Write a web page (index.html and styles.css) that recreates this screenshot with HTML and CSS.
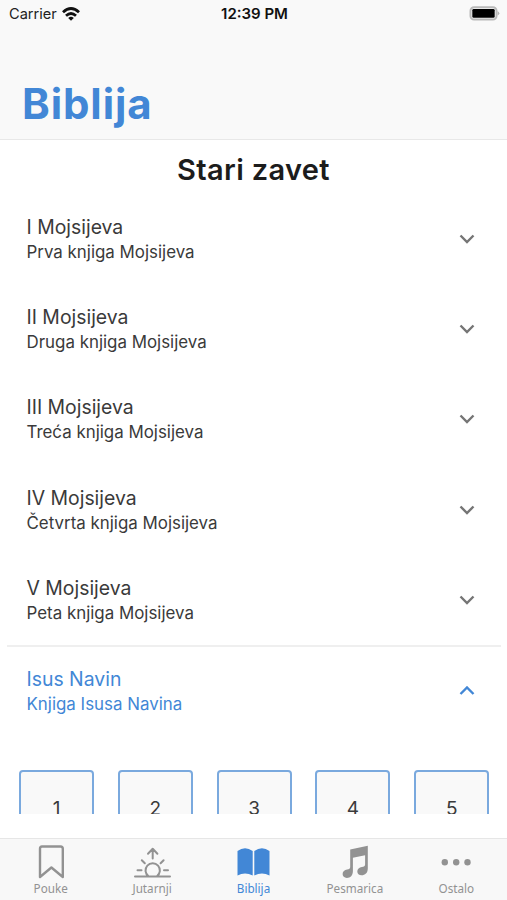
FILE: index.html
```html
<!DOCTYPE html>
<html lang="sr-Latn">
<head>
<meta charset="utf-8">
<title>Biblija</title>
<link rel="stylesheet" href="styles.css">
</head>
<body>
<div class="app">
  <header class="header">
    <div class="status">
      <div class="carrier"><span>Carrier</span>
        <svg class="wifi" viewBox="0 0 18 14"><g fill="none" stroke="#111" stroke-width="2.8"><path d="M1 5.2Q9-2.2 17 5.2"/><path d="M4 8.7Q9 4.200 14 8.700"/></g><path d="M6.200 10.900Q9 8.700 11.800 10.900L9 13.700Z" fill="#111"/></svg>
      </div>
      <div class="clock">12:39 PM</div>
      <svg class="battery" viewBox="0 0 31 15"><rect x="1.500" y="1.200" width="26" height="12.400" rx="3.600" fill="none" stroke="#b9b9b9" stroke-width="2"/><rect x="3.300" y="3" width="22.400" height="8.800" rx="1.300"/><path d="M28.600 5Q32 7.300 28.600 9.600Z" fill="#b4b4b4"/></svg>
    </div>
    <h1 class="title">Biblija</h1>
  </header>
  <main class="content">
    <h2 class="section-title">Stari zavet</h2>
    <div class="book"><div><div class="name">I Mojsijeva</div><div class="sub">Prva knjiga Mojsijeva</div></div><svg class="chevron" viewBox="0 0 16 10"><path d="M1.500 1.500L8 8L14.500 1.500"/></svg></div>
    <div class="book"><div><div class="name">II Mojsijeva</div><div class="sub">Druga knjiga Mojsijeva</div></div><svg class="chevron" viewBox="0 0 16 10"><path d="M1.500 1.500L8 8L14.500 1.500"/></svg></div>
    <div class="book"><div><div class="name">III Mojsijeva</div><div class="sub">Treća knjiga Mojsijeva</div></div><svg class="chevron" viewBox="0 0 16 10"><path d="M1.500 1.500L8 8L14.500 1.500"/></svg></div>
    <div class="book"><div><div class="name">IV Mojsijeva</div><div class="sub">Četvrta knjiga Mojsijeva</div></div><svg class="chevron" viewBox="0 0 16 10"><path d="M1.500 1.500L8 8L14.500 1.500"/></svg></div>
    <div class="book"><div><div class="name">V Mojsijeva</div><div class="sub">Peta knjiga Mojsijeva</div></div><svg class="chevron" viewBox="0 0 16 10"><path d="M1.500 1.500L8 8L14.500 1.500"/></svg></div>
    <div class="book open"><div><div class="name">Isus Navin</div><div class="sub">Knjiga Isusa Navina</div></div><svg class="chevron" viewBox="0 0 16 10"><path d="M1.500 8L8 1.500L14.500 8"/></svg></div>
    <div class="chapters"><div class="chapter">1</div><div class="chapter">2</div><div class="chapter">3</div><div class="chapter">4</div><div class="chapter">5</div></div>
  </main>
  <nav class="tabs">
    <div class="tab"><svg viewBox="0 0 40 36"><path class="line" d="M11 3.500H29.500Q31.800 3.500 31.800 5.800V34L20.400 24.500L9 34V5.800Q9 3.500 11 3.500Z"/></svg><span>Pouke</span></div>
    <div class="tab"><svg viewBox="0 0 40 36"><g class="line thin"><path d="M3 33.500H38M16.500 33.300A7.200 7.200 0 1 1 24.900 33.300M20.700 15.500V6M16 10.700L20.700 5.800L25.400 10.700M9.800 17.300L12.800 20.300M31.600 17.300L28.600 20.300M5.500 27.300H9.500M32 27.300H36"/></g></svg><span>Jutarnji</span></div>
    <div class="tab active"><svg viewBox="0 0 40 36"><path class="solid" d="M19.700 8V32.500Q12 28.500 4.500 32.500V8Q12 2.500 19.700 8ZM21.300 8V32.500Q29 28.500 36.500 32.500V8Q29 2.500 21.300 8Z"/></svg><span>Biblija</span></div>
    <div class="tab"><svg viewBox="0 0 40 36"><path class="solid" d="M15.200 6.500L32.800 2.800V25.500C32.800 30 30 32.300 26.600 32.300C23.900 32.300 22.300 30.800 22.300 28.500C22.300 25.800 24.300 24.500 26.800 24C29 23.500 30.100 23.200 30.100 21.500V12.300L17.900 14.800V28C17.900 32.500 15.200 34.900 11.900 34.900C9.200 34.900 7.600 33.400 7.600 31.100C7.600 28.400 9.600 27.100 12.100 26.600C14.200 26.200 15.200 25.800 15.200 24Z"/></svg><span>Pesmarica</span></div>
    <div class="tab"><svg viewBox="0 0 40 36"><g class="solid"><circle cx="8.800" cy="19.300" r="3.200"/><circle cx="20.200" cy="19.300" r="3.200"/><circle cx="31.500" cy="19.300" r="3.200"/></g></svg><span>Ostalo</span></div>
  </nav>
</div>
</body>
</html>
```
FILE: styles.css
```css
* { box-sizing: border-box; }
body { margin: 0; background: #fff; font-family: Inter, "Liberation Sans", sans-serif; color: #3a3a3a; }
.app { width: 507px; height: 900px; display: flex; flex-direction: column; overflow: hidden; }
.header { height: 140px; flex: none; background: #f9f9f9; border-bottom: 1px solid #e8e8e8; }
.status { height: 27px; display: grid; grid-template-columns: 1fr auto 1fr; align-items: center; padding: 0 7px 0 9px; font-size: 14.600px; color: #222; }
.carrier { display: flex; align-items: center; gap: 5.500px; }
.wifi { width: 18px; height: 14px; }
.clock { font-weight: 600; font-size: 15px; color: #111; }
.battery { width: 31px; height: 15px; justify-self: end; }
.title { margin: 52px 0 0 22px; font-size: 42px; line-height: 50px; font-weight: 700; letter-spacing: .9px; color: #4287d6; }
.content { height: 674px; flex: none; overflow: hidden; }
.section-title { margin: 0; height: 53.400px; padding-top: 12px; font-size: 29px; line-height: 36px; font-weight: 600; letter-spacing: .35px; text-align: center; color: #1c1c1c; }
.book { height: 90.400px; margin: 0 6px 0 7px; padding: 0 26.500px 0 19.500px; display: flex; align-items: center; justify-content: space-between; }
.name { font-size: 19.400px; line-height: 26px; }
.sub { font-size: 16.900px; line-height: 24px; }
.chevron { width: 16px; height: 10px; fill: none; stroke: #757575; stroke-width: 2.400; }
.open { color: #4287d6; border-top: 2px solid #efefef; padding-bottom: 1.500px; }
.open .chevron { stroke: #4287d6; }
.chapters { display: grid; grid-template-columns: repeat(5, 75px); column-gap: 23.800px; padding: 34px 0 0 19px; }
.chapter { height: 77px; border: 2px solid #7aa9de; border-radius: 4px; background: #f9f9f9; display: flex; align-items: center; justify-content: center; font-size: 19px; }
.tabs { margin-top: auto; height: 62px; border-top: 1px solid #e6e6e6; background: #f8f8f8; display: grid; grid-template-columns: repeat(5, 1fr); color: #929292; }
.tab { display: flex; flex-direction: column; align-items: center; padding-top: 3.500px; font-family: "Noto Sans", sans-serif; font-size: 11.700px; line-height: 16px; }
.tab svg { width: 40px; height: 36px; margin-bottom: 1px; }
.line { fill: none; stroke: currentColor; stroke-width: 2.400; stroke-linejoin: round; stroke-linecap: round; }
.thin { stroke-width: 2; }
.solid { fill: currentColor; }
.active { color: #4287d6; }
```
